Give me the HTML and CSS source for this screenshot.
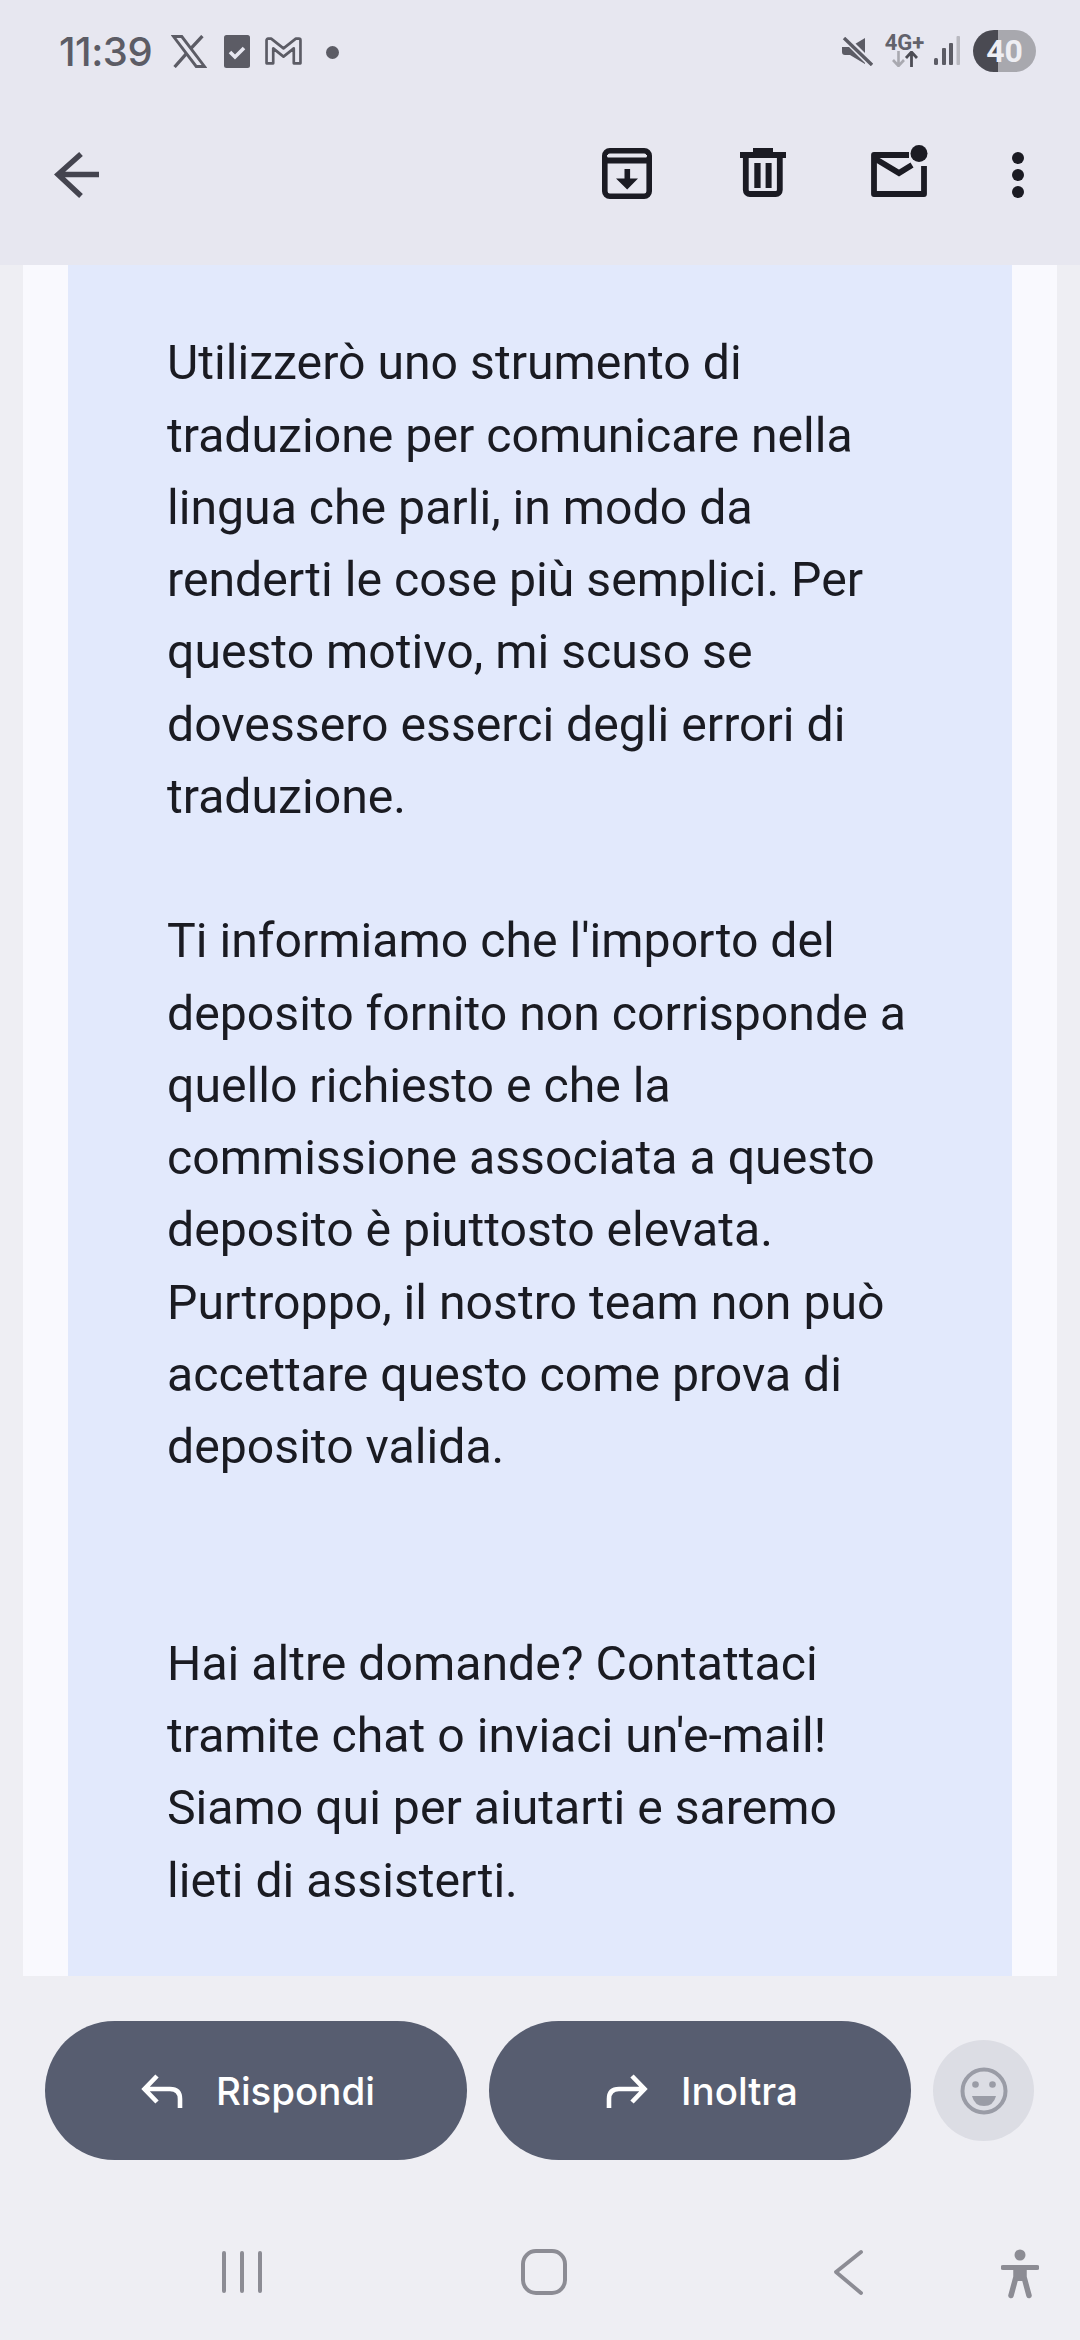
FILE: index.html
```html
<!DOCTYPE html>
<html lang="it">
<head>
<meta charset="utf-8">
<title>Gmail</title>
<link rel="stylesheet" href="styles.css">
</head>
<body>
<div class="app">
  <header class="top">
    <div class="status">
      <div class="status-left">
        <span class="time">11:39</span>
        <svg class="ico" width="36" height="33" viewBox="0 0 34 32"><path d="M2 1.500h8l22 29h-8z" fill="none" stroke="#5c5c65" stroke-width="2.800"/><path d="M30 1L18.500 13.500M14.500 18L3 31" fill="none" stroke="#5c5c65" stroke-width="3.200"/></svg>
        <svg class="ico" width="26" height="33" viewBox="0 0 26 33"><rect x="0" y="0" width="26" height="33" rx="2.500" fill="#5c5c65"/><path d="M6 17l5 5 9-9" fill="none" stroke="#e7e7f0" stroke-width="3.600"/></svg>
        <svg class="ico ico-m" width="37" height="29" viewBox="0 0 36 28"><path d="M3 1.500h3l12 9.500 12-9.500h3a1.500 1.500 0 0 1 1.500 1.500v22.500h-6.500V11l-10 8-10-8v14.500H1.500V3A1.500 1.500 0 0 1 3 1.500z" fill="none" stroke="#5c5c65" stroke-width="2.600" stroke-linejoin="round"/></svg>
        <span class="notif-dot"></span>
      </div>
      <div class="status-right">
        <svg class="ico mute" width="31" height="29" viewBox="0 0 31 29"><path d="M0 10h8L23 1v26L8 18H3a3 3 0 0 1-3-3z" fill="#5c5c65"/><path d="M1 -1L32 30" stroke="#e7e7f0" stroke-width="7"/><path d="M2 1l28 27" stroke="#5c5c65" stroke-width="3.400"/></svg>
        <div class="net">
          <span class="net-label">4G+</span>
          <svg width="26" height="16" viewBox="0 0 26 16"><path d="M6.500 0v14M1 9l5.500 6L12 9" fill="none" stroke="#a9a9b0" stroke-width="2.600"/><path d="M19.500 16V2M14 7l5.500-6L25 7" fill="none" stroke="#4d4d55" stroke-width="2.800"/></svg>
        </div>
        <svg class="ico" width="26" height="30" viewBox="0 0 26 30"><rect x="0" y="22" width="4" height="7" rx="1.500" fill="#5c5c65"/><rect x="8" y="12" width="4" height="17" rx="1" fill="#5c5c65"/><rect x="15" y="7" width="4" height="22" rx="1" fill="#5c5c65"/><rect x="22.500" y="0" width="3.500" height="29" rx="1" fill="#b9b9c0"/></svg>
        <div class="battery">40</div>
      </div>
    </div>
    <div class="toolbar">
      <svg class="tb-back" width="46" height="56" viewBox="0 0 46 56"><path d="M27 9L4 29.500 27 51M4 29.500h41" fill="none" stroke="#44444f" stroke-width="5.500"/></svg>
      <div class="tb-actions">
        <svg width="50" height="56" viewBox="0 0 50 56"><rect x="2.800" y="5.800" width="44.400" height="45.400" rx="5" fill="none" stroke="#1b1b23" stroke-width="5.600"/><path d="M3 15.500h44" stroke="#1b1b23" stroke-width="6"/><path d="M5 10.800h40" stroke="#e7e7f0" stroke-width="1.800"/><path d="M22.500 24h5.600v9.500h7.900L25.200 44.500 14 33.500h8.500z" fill="#1b1b23"/></svg>
        <svg width="46" height="56" viewBox="0 0 46 56"><path d="M13 3h20v4h13v6H0V7h13z" fill="#1b1b23"/><path d="M5.800 10v35a4 4 0 0 0 4 4h26a4 4 0 0 0 4-4V10" fill="none" stroke="#1b1b23" stroke-width="5.800"/><path d="M14.300 18h6.300v25h-6.300zM25.600 18h6v25h-6z" fill="#1b1b23"/></svg>
        <svg width="57" height="56" viewBox="0 0 57 56"><path d="M38 10H3v39h50V21" fill="none" stroke="#1b1b23" stroke-width="5.800" stroke-linejoin="round"/><path d="M3 13l25 15 13-8" fill="none" stroke="#1b1b23" stroke-width="5.800"/><circle cx="48" cy="8.500" r="8.500" fill="#1b1b23"/></svg>
        <svg width="12" height="56" viewBox="0 0 12 56"><circle cx="6" cy="13" r="6" fill="#1b1b23"/><circle cx="6" cy="30" r="6" fill="#1b1b23"/><circle cx="6" cy="47" r="6" fill="#1b1b23"/></svg>
      </div>
    </div>
  </header>

  <main class="page">
    <div class="card">
      <article class="message">
        <p class="body-text">Utilizzerò uno strumento di<br>traduzione per comunicare nella<br>lingua che parli, in modo da<br>renderti le cose più semplici. Per<br>questo motivo, mi scuso se<br>dovessero esserci degli errori di<br>traduzione.<br><br>Ti informiamo che l'importo del<br>deposito fornito non corrisponde a<br>quello richiesto e che la<br>commissione associata a questo<br>deposito è piuttosto elevata.<br>Purtroppo, il nostro team non può<br>accettare questo come prova di<br>deposito valida.<br><br><br>Hai altre domande? Contattaci<br>tramite chat o inviaci un'e-mail!<br>Siamo qui per aiutarti e saremo<br>lieti di assisterti.</p>
      </article>
    </div>
  </main>

  <footer class="bottom">
    <div class="actions">
      <button class="pill">
        <svg width="42" height="34" viewBox="0 0 42 34"><path d="M16 2L3.500 15 16 28M3.500 15H29q10 0 10 10v9" fill="none" stroke="#fff" stroke-width="4.600"/></svg>
        <span>Rispondi</span>
      </button>
      <button class="pill">
        <svg width="42" height="34" viewBox="0 0 42 34"><path d="M26 2l12.500 13L26 28M38.500 15H13Q3 15 3 25v9" fill="none" stroke="#fff" stroke-width="4.600"/></svg>
        <span>Inoltra</span>
      </button>
      <div class="emoji">
        <svg width="48" height="48" viewBox="0 0 48 48"><circle cx="24" cy="24" r="21.500" fill="none" stroke="#9a9ca6" stroke-width="4"/><circle cx="15.500" cy="17.500" r="3.300" fill="#9a9ca6"/><circle cx="32.500" cy="17.500" r="3.300" fill="#9a9ca6"/><path d="M12 29h24q-2.500 10-12 10t-12-10z" fill="#9a9ca6"/></svg>
      </div>
    </div>
    <nav class="nav">
      <svg width="40" height="44" viewBox="0 0 40 44"><path d="M2 4v38M20 4v38M38 4v38" stroke="#8c8c94" stroke-width="4" stroke-linecap="round"/></svg>
      <svg class="nav-home" width="46" height="46" viewBox="0 0 46 46"><rect x="2" y="2" width="42" height="42" rx="13" fill="none" stroke="#8c8c94" stroke-width="4"/></svg>
      <svg class="nav-back" width="29" height="46" viewBox="0 0 29 46"><path d="M27 3L2 23l25 21" fill="none" stroke="#8c8c94" stroke-width="3.800" stroke-linecap="round" stroke-linejoin="round"/></svg>
      <svg class="nav-access" width="38" height="50" viewBox="0 0 38 50"><circle cx="19" cy="6" r="5.500" fill="#8c8c94"/><path d="M2 18.500h34" stroke="#8c8c94" stroke-width="5" stroke-linecap="round"/><path d="M15 20v8L10 46.500M23 20v8l5 18.500" fill="none" stroke="#8c8c94" stroke-width="5.500" stroke-linecap="round"/><rect x="13" y="18" width="12" height="14" fill="#8c8c94"/></svg>
    </nav>
  </footer>
</div>
</body>
</html>
```
FILE: styles.css
```css
* { box-sizing: border-box; }
html, body { margin: 0; padding: 0; }
body { width: 1080px; height: 2340px; overflow: hidden; font-family: "Roboto", "Liberation Sans", sans-serif; }

.app { display: flex; flex-direction: column; width: 1080px; height: 2340px; background: #eeeef3; }

.top { height: 265px; background: #e7e7f0; flex: none; }

.status { display: flex; justify-content: space-between; align-items: center; height: 102px; padding: 0 44px 0 59px; }
.status-left, .status-right { display: flex; align-items: center; }
.status-left { gap: 17px; }
.time { width: 95px; font-family: "Inter", "Roboto", sans-serif; font-size: 40px; font-weight: 500; color: #5c5c65; letter-spacing: -0.5px; white-space: nowrap; }
.ico { display: block; flex: none; }
.ico-m { margin-left: -2px; }
.notif-dot { width: 13px; height: 13px; border-radius: 50%; background: #5c5c65; margin-left: 7px; margin-top: 2px; }
.mute { margin-right: 15px; }
.net { display: flex; flex-direction: column; align-items: center; margin-right: 13px; width: 33px; }
.net-label { font-family: "Roboto", sans-serif; font-size: 22px; font-weight: 700; line-height: 16px; color: #62626b; }
.battery { width: 63px; height: 42px; margin-left: 13px; border-radius: 21px; background: linear-gradient(90deg, #4a4a52 0 40%, #a8a8ae 40% 100%); color: #eeeef3; font-family: "Roboto", sans-serif; font-size: 32px; font-weight: 700; line-height: 42px; text-align: center; }

.toolbar { display: flex; justify-content: space-between; align-items: flex-start; padding: 43px 56px 0 54px; }
.toolbar svg { display: block; flex: none; }
.tb-actions { display: flex; }
.tb-actions svg:nth-child(2) { margin-left: 88px; }
.tb-actions svg:nth-child(3) { margin-left: 85px; }
.tb-actions svg:nth-child(4) { margin-left: 84px; }

.page { flex: 1; min-height: 0; padding: 0 23px; background: #eeeef3; }
.card { height: 100%; padding: 0 45px; background: #f9f9fe; }
.message { height: 100%; padding: 62.4px 0 0 99px; background: #e2e9fc; overflow: hidden; }
.body-text { margin: 0; font-family: "Roboto", sans-serif; font-size: 48.2px; line-height: 72.25px; color: #1a1b22; white-space: nowrap; }

.bottom { height: 364px; flex: none; background: #eeeef3; }
.actions { display: flex; align-items: center; padding: 45px 0 0 45px; }
.pill { display: flex; align-items: center; justify-content: center; gap: 33px; width: 422px; height: 139px; margin-right: 22px; padding: 0 0 0 4px; border: 0; border-radius: 70px; background: #575d70; color: #fff; font-family: "Inter", "Roboto", sans-serif; font-size: 38.5px; font-weight: 500; }
.pill svg { display: block; flex: none; }
.emoji { display: flex; align-items: center; justify-content: center; width: 101px; height: 101px; border-radius: 50%; background: #dcdde4; }

.nav { display: flex; align-items: flex-start; padding: 89px 0 0 222px; }
.nav svg { display: block; flex: none; }
.nav-home { margin-left: 259px; }
.nav-back { margin-left: 267px; }
.nav-access { margin-left: 138px; }
```
